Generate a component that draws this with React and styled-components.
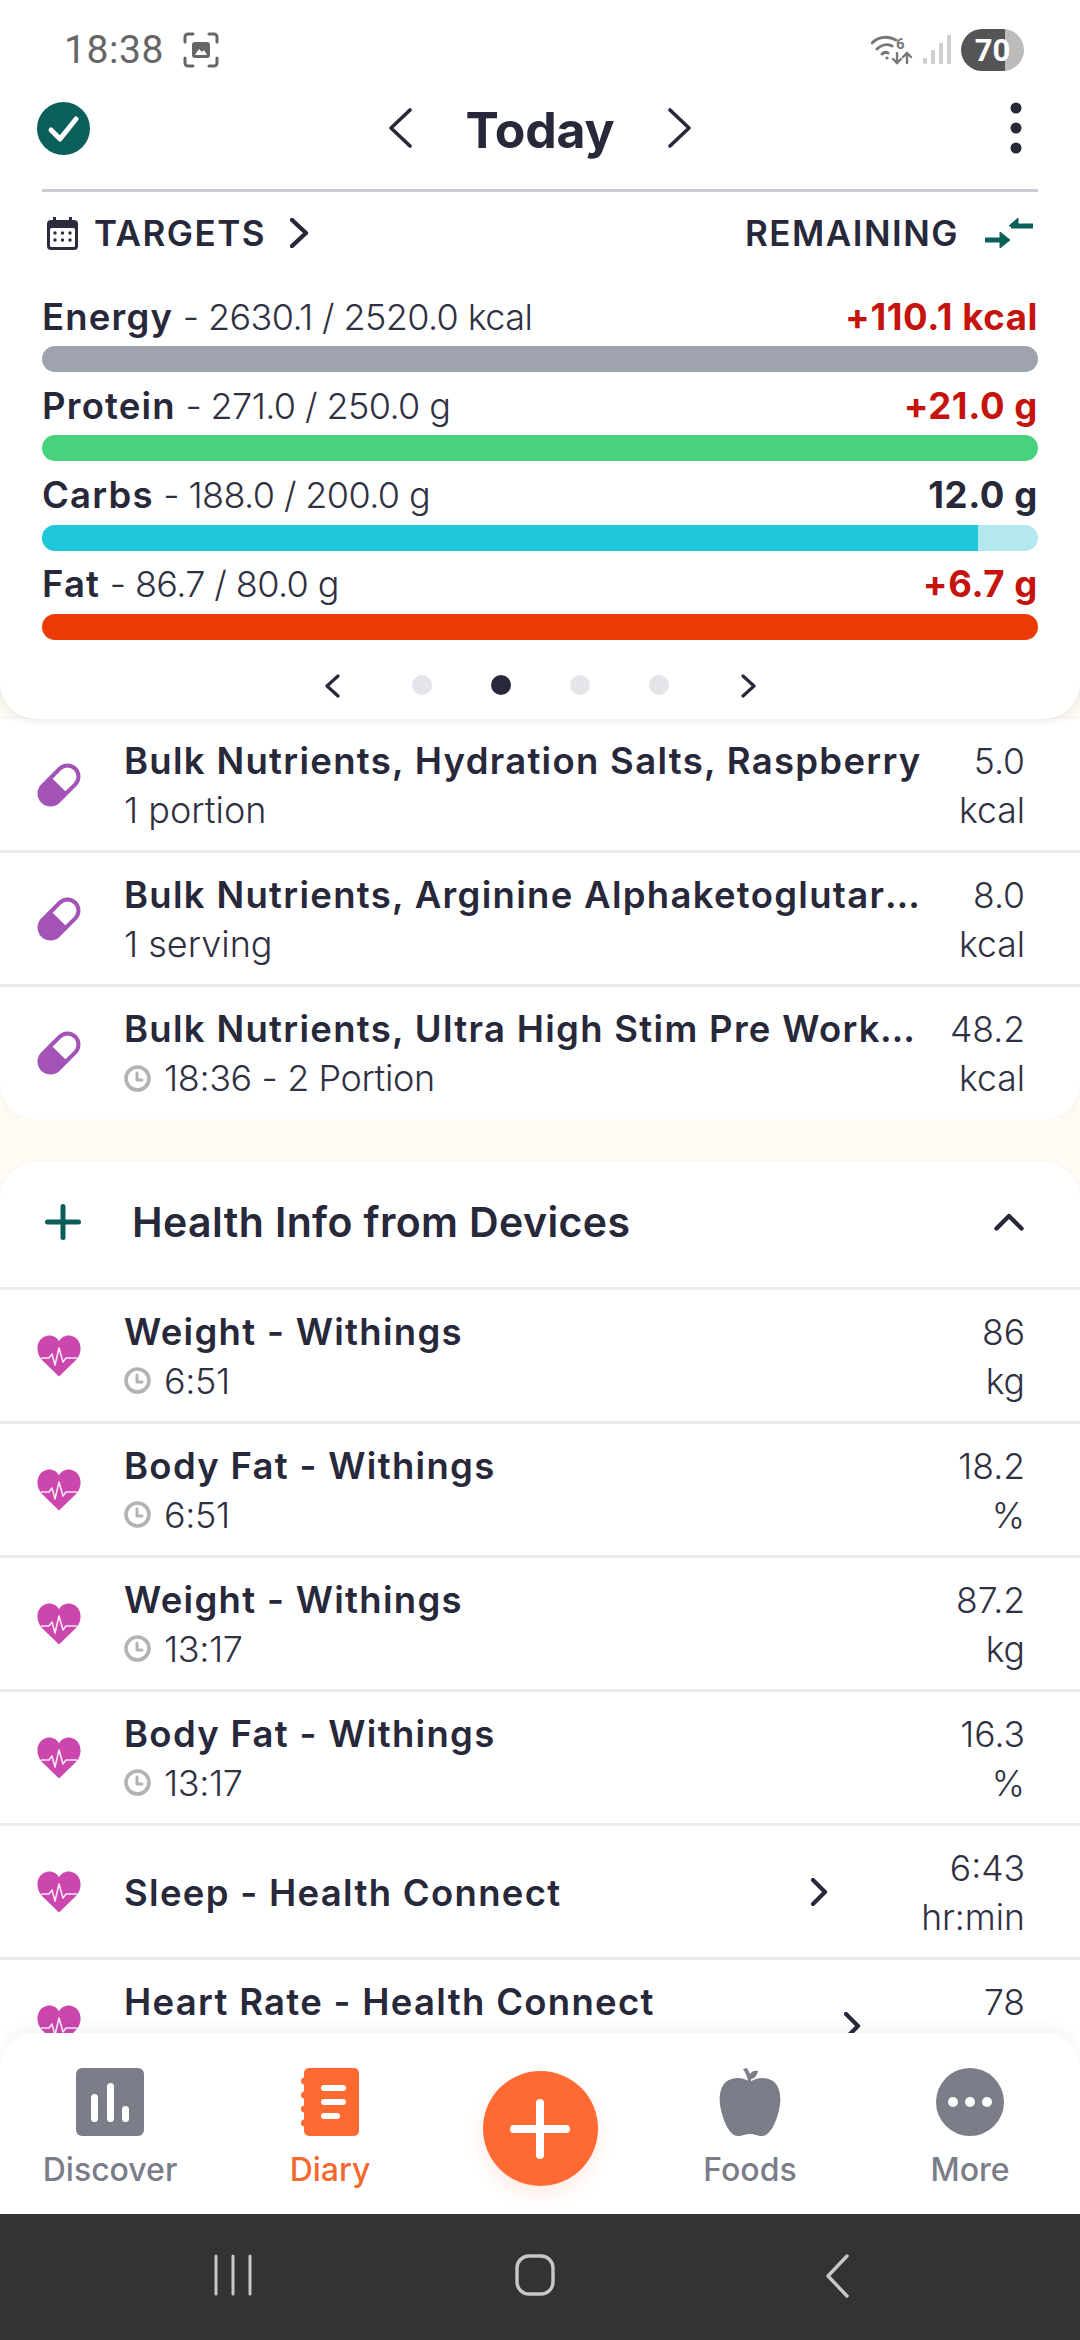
import React from "react";
import styled, { createGlobalStyle } from "styled-components";

const Global = createGlobalStyle`
  html, body { margin: 0; padding: 0; background: #fffaf3; }
  * { box-sizing: border-box; }
  body { font-family: Inter, "Noto Sans", sans-serif; color: #27283a; }
`;

const Screen = styled.div`
  width: 1080px; height: 2340px; display: flex; flex-direction: column; overflow: hidden; background: #fffaf3;
`;
const Stage = styled.div`
  position: relative; height: 2214px; overflow: hidden; flex: none;
`;
const TopCard = styled.header`
  position: relative; z-index: 2; height: 719px; background: #fff;
  border-radius: 0 0 36px 36px; box-shadow: 0 2px 10px rgba(40,42,60,.1);
  display: flex; flex-direction: column;
`;
const StatusBar = styled.div`
  height: 100px; padding: 0 56px 0 64px; display: flex; align-items: center; justify-content: space-between; flex: none;
`;
const StatusGroup = styled.div`
  display: flex; align-items: center; gap: ${p => p.$gap}px;
`;
const Clock = styled.span`
  font: 400 39px/1 Roboto, sans-serif; color: #666; letter-spacing: .6px;
`;
const Battery = styled.div`
  width: 63px; height: 42px; border-radius: 21px; display: flex; align-items: center; justify-content: center;
  background: linear-gradient(90deg, #555 0 44px, #bbb 44px); color: #fff;
  font: 700 31px/1 Roboto, sans-serif;
`;
const HeaderRow = styled.div`
  height: 56px; padding: 0 58px 0 37px; display: flex; align-items: center; justify-content: space-between; flex: none;
`;
const DateNav = styled.div`
  display: flex; align-items: center; gap: 54px; margin-right: 20px;
`;
const Title = styled.h1`
  margin: 3px 0 0; font-size: 50px; line-height: 56px; font-weight: 700; color: #27283a; letter-spacing: -.2px;
`;
const Divider = styled.div`
  height: 3px; margin: 33px 42px 0; background: #c9cbd2; flex: none;
`;
const TargetsRow = styled.div`
  height: 48px; margin-top: 17px; padding: 0 47px 0 47px; display: flex; align-items: center; justify-content: space-between; flex: none;
`;
const TargetSide = styled.div`
  display: flex; align-items: center; gap: ${p => p.$gap}px;
`;
const Caps = styled.span`
  font-size: 35px; font-weight: 600; letter-spacing: 1.5px; line-height: 48px; color: #27283a;
`;
const TargetChevron = styled.span`
  display: flex; margin-left: 8px;
`;
const Metrics = styled.div`
  margin-top: 37px; padding: 0 42px; display: flex; flex-direction: column; gap: 11.3px; flex: none;
`;
const Metric = styled.div`
  display: flex; flex-direction: column; gap: 7px;
`;
const MetricText = styled.div`
  height: 45px; display: flex; align-items: center; justify-content: space-between; white-space: nowrap;
`;
const MetricName = styled.span`
  font-size: 36.5px; font-weight: 600; letter-spacing: 1.2px;
  & > span { font-size: 36px; font-weight: 300; letter-spacing: -.6px; color: #2f3042; }
`;
const MetricDelta = styled.span`
  font-size: 36.5px; font-weight: 700; color: ${p => (p.$over ? "#c5130d" : "#27283a")}; letter-spacing: .6px;
`;
const Track = styled.div`
  height: 26px; border-radius: 13px; overflow: hidden; background: ${p => p.$bg};
`;
const Fill = styled.div`
  height: 100%; background: ${p => p.$color};
`;
const Pager = styled.div`
  margin-top: 25px; height: 40px; position: relative; display: grid;
  grid-template-columns: 79px 79px 79px 79px; justify-content: center; align-items: center; justify-items: center; flex: none;
`;
const PagerArrow = styled.span`
  position: absolute; top: 9px; left: ${p => p.$left}px; display: flex;
`;
const Dot = styled.span`
  width: 20px; height: 20px; border-radius: 50%; background: ${p => (p.$on ? "#27283a" : "#e3e5eb")};
`;
const Card = styled.section`
  background: #fff; border-radius: ${p => p.$radius};
  box-shadow: 0 1px 6px rgba(40,42,60,.04);
`;
const HealthHead = styled.div`
  height: 128px; display: flex; align-items: center; padding: 0 56px 6px 45px; border-bottom: 3px solid #ebecef;
`;
const HealthTitle = styled.h2`
  margin: 0 0 0 51px; flex: 1; font-size: 41px; font-weight: 600; line-height: 48px; letter-spacing: .4px; color: #27283a;
`;
const Gap = styled.div`
  height: 43px; background: #fffaf3;
`;
const Row = styled.div`
  height: ${p => (p.$last ? 132 : 134)}px; display: flex; align-items: center; padding: 0 55px 0 37px;
  ${p => !p.$last && "border-bottom: 3px solid #ebecef;"}
`;
const RowIcon = styled.span`
  width: 44px; margin-right: 43px; display: flex; flex: none;
`;
const RowBody = styled.div`
  flex: 1; min-width: 0; display: flex; flex-direction: column; padding-top: 2px;
`;
const RowTitle = styled.div`
  font-size: 36.5px; font-weight: 600; line-height: 48px; letter-spacing: 1.3px; color: #27283a;
  white-space: nowrap; overflow: hidden; text-overflow: ellipsis;
`;
const RowSub = styled.div`
  height: 50px; font-size: 36px; font-weight: 300; line-height: 50px; color: #2f3042; white-space: nowrap;
  display: flex; align-items: center; gap: 13px; letter-spacing: ${p => (p.$tight ? "-.4px" : "0")};
`;
const RowChevron = styled.span`
  display: flex; flex: none; margin-right: ${p => p.$gap}px;
`;
const RowValue = styled.div`
  flex: none; margin-left: 30px; padding-top: 4px; text-align: right; font-size: 35.5px; font-weight: 300; color: #2f3042;
  & > div:first-child { line-height: 48px; }
  & > div:last-child { line-height: 50px; }
`;
const Nav = styled.nav`
  position: absolute; z-index: 3; left: 0; right: 0; bottom: 0; height: 181px; background: #fff;
  border-radius: 36px 36px 0 0; box-shadow: 0 -6px 16px rgba(40,42,60,.05);
  display: grid; grid-template-columns: 220px 220px 200px 220px 220px; padding-top: 35px;
`;
const NavItem = styled.div`
  display: flex; flex-direction: column; align-items: center;
`;
const NavLabel = styled.span`
  margin-top: 14px; font-size: 32px; line-height: 40px; font-weight: 500; color: ${p => p.$color};
`;
const PlusButton = styled.div`
  width: 115px; height: 115px; border-radius: 50%; margin: 3px auto 0; background: #ff6a33;
  box-shadow: 0 8px 18px rgba(255,106,51,.14); display: flex; align-items: center; justify-content: center;
`;
const SystemBar = styled.div`
  height: 126px; background: #333; display: grid; grid-template-columns: repeat(3, 302px); padding: 40px 0 0 82px; flex: none;
`;
const SystemCell = styled.div`
  display: flex; justify-content: center; align-items: flex-start;
`;

const Chevron = ({ dir = "right", w = 22, h = 38, sw = 3.6, color = "#27283a" }) => (
  <svg width={w} height={h} viewBox={`0 0 ${w} ${h}`} fill="none">
    <path
      d={dir === "right" ? `M2 2 L${w - 3} ${h / 2} L2 ${h - 2}` : `M${w - 2} 2 L3 ${h / 2} L${w - 2} ${h - 2}`}
      stroke={color} strokeWidth={sw} strokeLinecap="round" strokeLinejoin="round"
    />
  </svg>
);

const Pill = () => (
  <svg width="44" height="44" viewBox="0 0 44 44">
    <g transform="rotate(-45 22 22)">
      <rect x="-3" y="9" width="50" height="26" rx="13" fill="#a352b5" />
      <path d="M22 13 H34 a9 9 0 0 1 0 18 H22 Z" fill="#fff" />
    </g>
  </svg>
);

const Heart = () => (
  <svg width="44" height="42" viewBox="0 0 44 42">
    <path d="M22 41.5 L5 25 C-3 16 0 3 10 .8 C15 -.2 20 2 22 6.5 C24 2 29 -.2 34 .8 C44 3 47 16 39 25 Z" fill="#cb47ad" />
    <path d="M4 23 H12 L15 19 L18 30 L22 13 L26 27 L29 23 H40" fill="none" stroke="#fbe6f5" strokeWidth="1.6" strokeLinejoin="round" />
  </svg>
);

const ClockIcon = () => (
  <svg width="27" height="27" viewBox="0 0 27 27" fill="none">
    <circle cx="13.5" cy="13.5" r="11.5" stroke="#b3b3b3" strokeWidth="3.6" />
    <path d="M13 8 V15 H18" stroke="#b3b3b3" strokeWidth="3" strokeLinecap="round" strokeLinejoin="round" />
  </svg>
);

const ScreenshotIcon = () => (
  <svg width="36" height="36" viewBox="0 0 36 36" fill="none">
    <path d="M2 10 V5 a3 3 0 0 1 3 -3 H10 M26 2 H31 a3 3 0 0 1 3 3 V10 M34 26 V31 a3 3 0 0 1 -3 3 H26 M10 34 H5 a3 3 0 0 1 -3 -3 V26" stroke="#666" strokeWidth="3" strokeLinecap="round" />
    <rect x="9" y="10" width="18" height="16" rx="3" fill="#666" />
    <path d="M12 23 L16 17 L19 20 L21 18 L24 23 Z" fill="#fff" />
  </svg>
);

const WifiIcon = () => (
  <svg width="42" height="30" viewBox="0 0 42 30" fill="none" stroke="#777" strokeLinecap="round">
    <path d="M1 8 C8 1 18 1 25 5" strokeWidth="3" />
    <path d="M6 14 C11 9 17 9 21 11" strokeWidth="3" />
    <path d="M11 19 C13 17 15 17 17 18" strokeWidth="3" />
    <circle cx="16" cy="23" r="1.6" fill="#777" stroke="none" />
    <text x="25" y="14" fill="#777" stroke="none" fontFamily="Roboto, sans-serif" fontWeight="700" fontSize="15">6</text>
    <path d="M26 18 V28 M22 24 L26 28 L30 24" strokeWidth="2.4" />
    <path d="M36 28 V18 M32 22 L36 18 L40 22" strokeWidth="2.4" />
  </svg>
);

const SignalIcon = () => (
  <svg width="28" height="30" viewBox="0 0 28 30" fill="#cfcfcf">
    <rect x="0" y="23" width="4" height="6" rx="1" />
    <rect x="8" y="15" width="4" height="14" rx="1" />
    <rect x="16" y="8" width="4" height="21" rx="1" />
    <rect x="24" y="0" width="4" height="29" rx="1" />
  </svg>
);

const CheckBadge = () => (
  <svg width="53" height="53" viewBox="0 0 53 53">
    <circle cx="26.5" cy="26.5" r="26.5" fill="#0a5f5a" />
    <path d="M14 28 L23 37 L39 17" fill="none" stroke="#fff" strokeWidth="5" strokeLinecap="round" strokeLinejoin="round" />
  </svg>
);

const Dots = () => (
  <svg width="12" height="52" viewBox="0 0 12 52" fill="#27283a">
    <circle cx="6" cy="6" r="5.5" />
    <circle cx="6" cy="26" r="5.5" />
    <circle cx="6" cy="46" r="5.5" />
  </svg>
);

const CalendarIcon = () => (
  <svg width="31" height="33" viewBox="0 0 31 33">
    <rect x="0" y="3" width="31" height="30" rx="4" fill="#2b2c3d" />
    <rect x="6" y="0" width="3" height="6" fill="#2b2c3d" />
    <rect x="22" y="0" width="3" height="6" fill="#2b2c3d" />
    <rect x="3" y="11" width="25" height="19" rx="1.5" fill="#fff" />
    {[8, 15.5, 23].map(x => [16, 23].map(y => <circle key={`${x}-${y}`} cx={x} cy={y} r="1.7" fill="#2b2c3d" />))}
  </svg>
);

const SwapIcon = () => (
  <svg width="48" height="32" viewBox="0 0 48 32" fill="none" stroke="#0a5f5a" strokeWidth="5">
    <path d="M48 9 H26" />
    <path d="M33 1 L24 9 L33 9 Z" fill="#0a5f5a" strokeWidth="1" strokeLinejoin="round" />
    <path d="M0 23 H22" />
    <path d="M15 15 L25 23 L15 31 Z" fill="#0a5f5a" strokeWidth="1" strokeLinejoin="round" />
  </svg>
);

const PlusGlyph = ({ size, sw, color }) => (
  <svg width={size} height={size} viewBox={`0 0 ${size} ${size}`}>
    <path d={`M${size / 2} ${sw / 2} V${size - sw / 2} M${sw / 2} ${size / 2} H${size - sw / 2}`} stroke={color} strokeWidth={sw} strokeLinecap="round" />
  </svg>
);

const DiscoverIcon = () => (
  <svg width="68" height="68" viewBox="0 0 68 68">
    <rect width="68" height="68" rx="6" fill="#7b7d89" />
    <rect x="15" y="26" width="7" height="28" rx="3.5" fill="#fff" />
    <rect x="31" y="15" width="7" height="39" rx="3.5" fill="#fff" />
    <rect x="46" y="38" width="7" height="16" rx="3.5" fill="#fff" />
  </svg>
);

const DiaryIcon = () => (
  <svg width="58" height="68" viewBox="0 0 58 68">
    <rect x="3" y="0" width="55" height="68" rx="5" fill="#ff6a33" />
    {[13, 27, 41, 55].map(y => <circle key={y} cx="3.5" cy={y} r="3.5" fill="#ff6a33" />)}
    <rect x="20" y="17" width="25" height="6" rx="3" fill="#fff" />
    <rect x="20" y="31" width="25" height="6" rx="3" fill="#fff" />
    <rect x="20" y="45" width="19" height="6" rx="3" fill="#fff" />
  </svg>
);

const AppleIcon = () => (
  <svg width="62" height="68" viewBox="0 0 62 68" fill="#7b7d89">
    <path d="M31 14 C38 9 47 9 54 13 C61 18 63 30 60 42 C57 55 51 68 43 68 C38 68 36 66 31 66 C26 66 24 68 19 68 C11 68 5 55 2 42 C-1 30 1 18 8 13 C15 9 24 9 31 14 Z" />
    <path d="M29 15 C29 10 27 5 24 1 L28 0 L31 6 C33 3 36 2 39 3 C38 8 35 11 32 11 L32 15 Z" />
  </svg>
);

const MoreIcon = () => (
  <svg width="68" height="68" viewBox="0 0 68 68">
    <circle cx="34" cy="34" r="34" fill="#7b7d89" />
    <circle cx="17" cy="34" r="5" fill="#fff" />
    <circle cx="34" cy="34" r="5" fill="#fff" />
    <circle cx="51" cy="34" r="5" fill="#fff" />
  </svg>
);

const metrics = [
  { name: "Energy", detail: " - 2630.1 / 2520.0 kcal", delta: "+110.1 kcal", over: true, color: "#9fa3ae", pct: 100 },
  { name: "Protein", detail: " - 271.0 / 250.0 g", delta: "+21.0 g", over: true, color: "#48d27c", pct: 100 },
  { name: "Carbs", detail: " - 188.0 / 200.0 g", delta: "12.0 g", over: false, color: "#1fc7da", pct: 94, bg: "#b2e8ee" },
  { name: "Fat", detail: " - 86.7 / 80.0 g", delta: "+6.7 g", over: true, color: "#ea3b05", pct: 100 },
];

const foods = [
  { title: "Bulk Nutrients, Hydration Salts, Raspberry", sub: "1 portion", value: "5.0" },
  { title: "Bulk Nutrients, Arginine Alphaketoglutarate", sub: "1 serving", value: "8.0" },
  { title: "Bulk Nutrients, Ultra High Stim Pre Workout", sub: "18:36 - 2 Portion", time: true, value: "48.2", last: true },
];

const health = [
  { title: "Weight - Withings", sub: "6:51", value: "86", unit: "kg" },
  { title: "Body Fat - Withings", sub: "6:51", value: "18.2", unit: "%" },
  { title: "Weight - Withings", sub: "13:17", value: "87.2", unit: "kg" },
  { title: "Body Fat - Withings", sub: "13:17", value: "16.3", unit: "%" },
  { title: "Sleep - Health Connect", value: "6:43", unit: "hr:min", chevron: 63 },
  { title: "Heart Rate - Health Connect", blank: true, value: "78", unit: "bpm", chevron: 60 },
];

const navItems = [
  { label: "Discover", Icon: DiscoverIcon, color: "#7b7d89" },
  { label: "Diary", Icon: DiaryIcon, color: "#f4692f" },
  null,
  { label: "Foods", Icon: AppleIcon, color: "#7b7d89" },
  { label: "More", Icon: MoreIcon, color: "#7b7d89" },
];

export default function App() {
  return (
    <Screen>
      <Global />
      <Stage>
        <TopCard>
          <StatusBar>
            <StatusGroup $gap={19}>
              <Clock>18:38</Clock>
              <ScreenshotIcon />
            </StatusGroup>
            <StatusGroup $gap={10}>
              <WifiIcon />
              <SignalIcon />
              <Battery>70</Battery>
            </StatusGroup>
          </StatusBar>
          <HeaderRow>
            <CheckBadge />
            <DateNav>
              <Chevron dir="left" w={24} h={40} />
              <Title>Today</Title>
              <Chevron w={24} h={40} />
            </DateNav>
            <Dots />
          </HeaderRow>
          <Divider />
          <TargetsRow>
            <TargetSide $gap={16}>
              <CalendarIcon />
              <Caps>TARGETS</Caps>
              <TargetChevron><Chevron w={19} h={30} sw={4.4} /></TargetChevron>
            </TargetSide>
            <TargetSide $gap={26}>
              <Caps>REMAINING</Caps>
              <SwapIcon />
            </TargetSide>
          </TargetsRow>
          <Metrics>
            {metrics.map(m => (
              <Metric key={m.name}>
                <MetricText>
                  <MetricName>{m.name}<span>{m.detail}</span></MetricName>
                  <MetricDelta $over={m.over}>{m.delta}</MetricDelta>
                </MetricText>
                <Track $bg={m.bg || m.color}>
                  <Fill $color={m.color} style={{ width: `${m.pct}%` }} />
                </Track>
              </Metric>
            ))}
          </Metrics>
          <Pager>
            <PagerArrow $left={324}><Chevron dir="left" w={16} h={24} sw={3.2} /></PagerArrow>
            <Dot /><Dot $on /><Dot /><Dot />
            <PagerArrow $left={741}><Chevron w={16} h={24} sw={3.2} /></PagerArrow>
          </Pager>
        </TopCard>

        <Card $radius="0 0 36px 36px">
          {foods.map(f => (
            <Row key={f.title} $last={f.last}>
              <RowIcon><Pill /></RowIcon>
              <RowBody>
                <RowTitle>{f.title}</RowTitle>
                <RowSub $tight={f.time}>{f.time && <ClockIcon />}{f.sub}</RowSub>
              </RowBody>
              <RowValue><div>{f.value}</div><div>kcal</div></RowValue>
            </Row>
          ))}
        </Card>
        <Gap />
        <Card $radius="36px 36px 0 0">
          <HealthHead>
            <PlusGlyph size={36} sw={5} color="#0a5f5a" />
            <HealthTitle>Health Info from Devices</HealthTitle>
            <svg width="30" height="18" viewBox="0 0 30 18" fill="none">
              <path d="M2.5 15.5 L15 3 L27.5 15.5" stroke="#27283a" strokeWidth="4.4" strokeLinecap="round" strokeLinejoin="round" />
            </svg>
          </HealthHead>
          {health.map((h, i) => (
            <Row key={i}>
              <RowIcon><Heart /></RowIcon>
              <RowBody>
                <RowTitle>{h.title}</RowTitle>
                {h.sub && <RowSub $tight><ClockIcon />{h.sub}</RowSub>}
                {h.blank && <RowSub />}
              </RowBody>
              {h.chevron && <RowChevron $gap={h.chevron}><Chevron w={17} h={28} sw={4.2} /></RowChevron>}
              <RowValue><div>{h.value}</div><div>{h.unit}</div></RowValue>
            </Row>
          ))}
        </Card>

        <Nav>
          {navItems.map(n =>
            n ? (
              <NavItem key={n.label}>
                <n.Icon />
                <NavLabel $color={n.color}>{n.label}</NavLabel>
              </NavItem>
            ) : (
              <NavItem key="add">
                <PlusButton><PlusGlyph size={60} sw={8} color="#fff" /></PlusButton>
              </NavItem>
            )
          )}
        </Nav>
      </Stage>
      <SystemBar>
        <SystemCell>
          <svg width="38" height="42" viewBox="0 0 38 42" stroke="#c8c8c8" strokeWidth="3" strokeLinecap="round">
            <path d="M2 2 V40 M19 2 V40 M36 2 V40" />
          </svg>
        </SystemCell>
        <SystemCell>
          <svg width="40" height="42" viewBox="0 0 40 42" fill="none">
            <rect x="2" y="2" width="36" height="38" rx="12" stroke="#c8c8c8" strokeWidth="3.4" />
          </svg>
        </SystemCell>
        <SystemCell>
          <svg width="24" height="44" viewBox="0 0 24 44" fill="none">
            <path d="M22 2 L3 22 L22 42" stroke="#c8c8c8" strokeWidth="3.4" strokeLinecap="round" strokeLinejoin="round" />
          </svg>
        </SystemCell>
      </SystemBar>
    </Screen>
  );
}
